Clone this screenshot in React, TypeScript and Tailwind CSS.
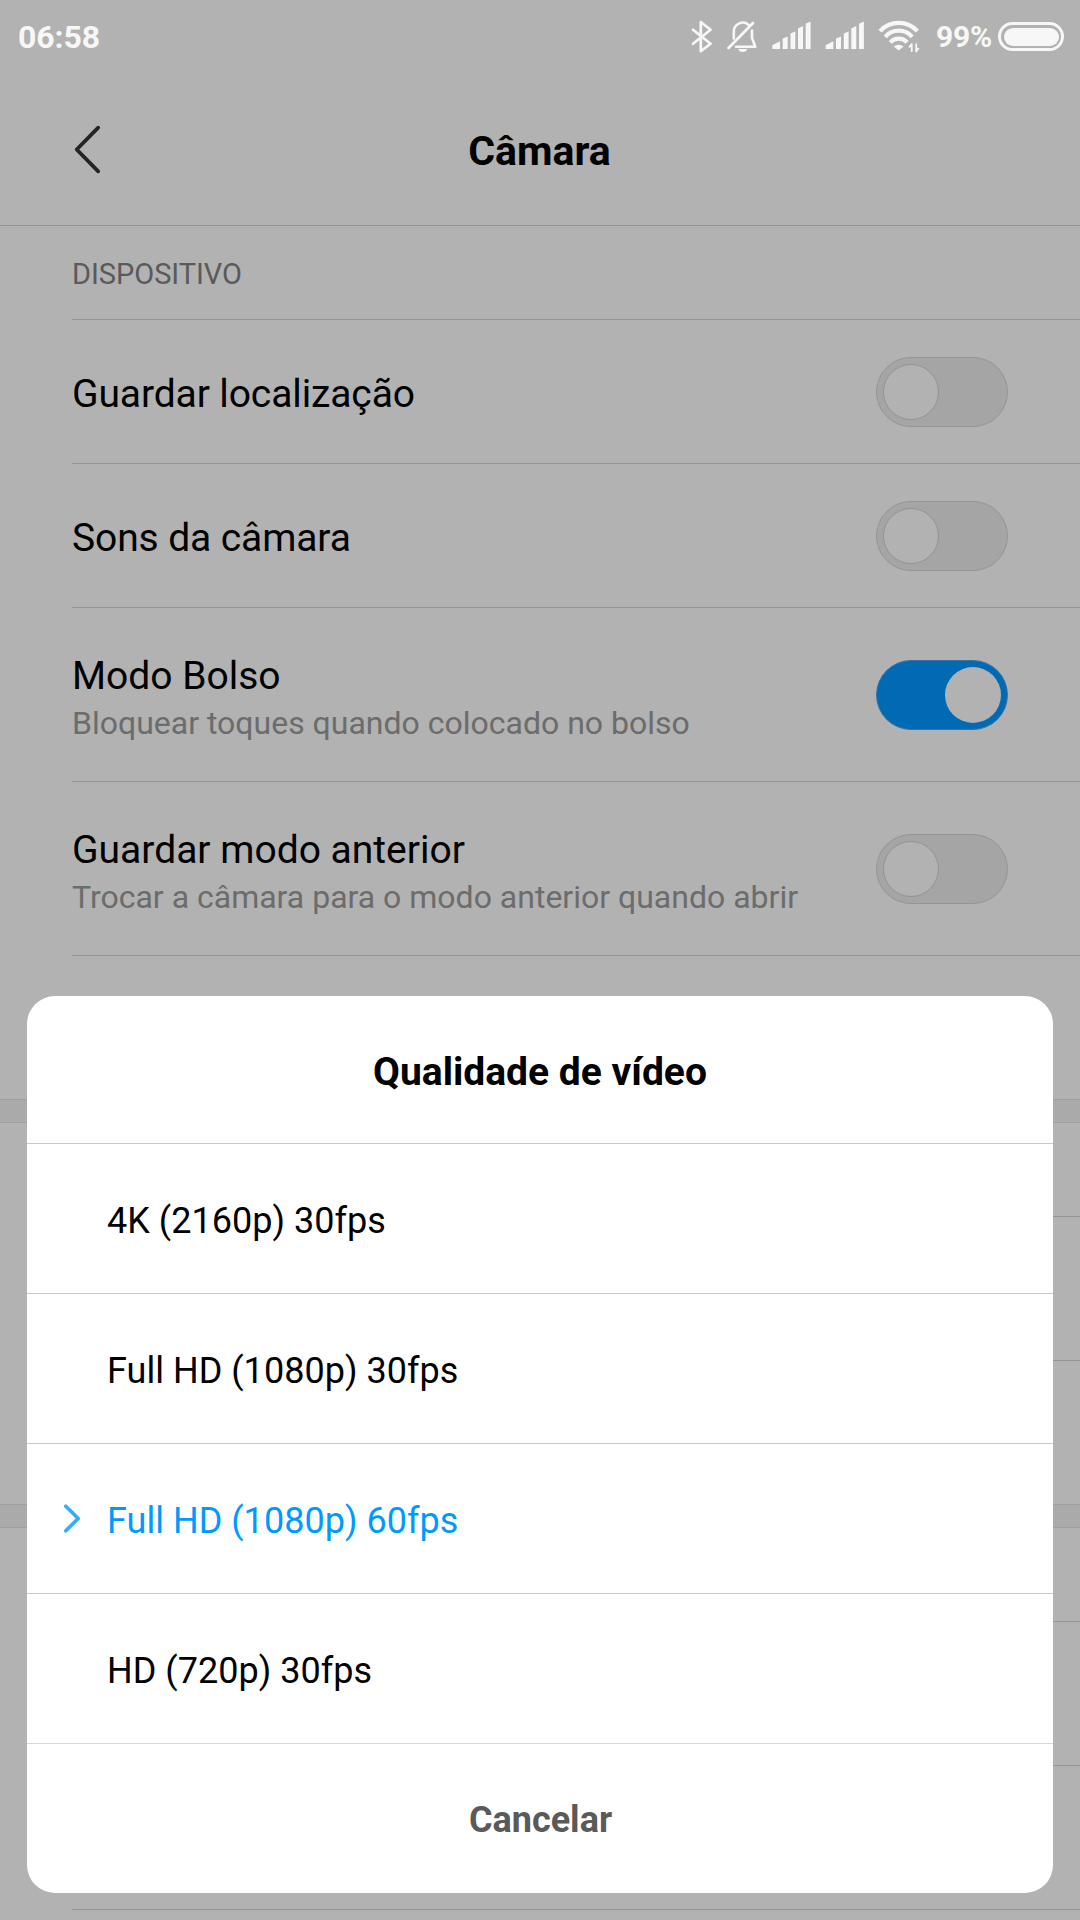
import React from "react";

function Switch({ on }: { on: boolean }) {
  return (
    <div
      className={
        on
          ? "flex h-[70px] w-[132px] shrink-0 items-center justify-end rounded-full border border-[#3a749e] bg-[#006bb4] px-[6px]"
          : "flex h-[70px] w-[132px] shrink-0 items-center rounded-full border border-[#959595] bg-[#a5a5a5] px-[6px]"
      }
    >
      <div className={on ? "size-14 rounded-full bg-[#b2b2b2]" : "size-14 rounded-full border border-[#939393] bg-[#b2b2b2]"} />
    </div>
  );
}

function SettingRow({ title, sub, on }: { title: string; sub?: string; on: boolean }) {
  return (
    <div
      className={
        sub
          ? "ml-18 flex h-[174px] items-center justify-between border-b border-[#959595] pt-px pr-18"
          : "ml-18 flex h-36 items-center justify-between border-b border-[#959595] pt-px pr-18"
      }
    >
      {sub ? (
        <div className="flex flex-col pt-2 whitespace-nowrap">
          <span className="text-[39px] leading-12 text-black">{title}</span>
          <span className="text-[32px] leading-[46px] text-[#6c6c6c]">{sub}</span>
        </div>
      ) : (
        <span className="pt-1 text-[39px] leading-12 tracking-[-0.11px] whitespace-nowrap text-black">{title}</span>
      )}
      <Switch on={on} />
    </div>
  );
}

const BARS =
  "M0 28.5V24.6L7.7 20.6V28.5ZM10.4 28.5V17.8L15.4 15.8V28.5ZM18.2 28.5V12.9L23 10.9V28.5ZM25.7 28.5V7.9L30.7 5.4V28.5ZM33.4 28.5V3.1L38.3 0.8V28.5Z";

function StatusBar() {
  return (
    <div className="flex h-[75px] justify-between text-[#f7f7f7]">
      <span className="mt-[17px] ml-[18px] text-[32px] leading-10 font-bold tracking-[-0.1px]">06:58</span>
      <div className="flex">
        <svg width="256" height="75" viewBox="680 0 256 75" fill="none" stroke="currentColor" strokeLinecap="round" strokeLinejoin="round">
          <path d="M693 29.7 710.6 43.8 700.8 51.3V22L710.6 29.7 693 43.8" strokeWidth="2.7" />
          <path d="M728.5 48 753 23" strokeWidth="2.7" />
          <path d="M733.8 38.5V32a9 9 0 0 1 14.7-7.3M752 30.5V38L755.3 46.7H736" strokeWidth="2.6" />
          <path d="M738 49H747.5Q746 52 742.7 52 739.5 52 738 49Z" fill="currentColor" stroke="none" />
          <g fill="currentColor" stroke="none">
            <path transform="translate(772.3 20.6)" d={BARS} />
            <path transform="translate(825.6 20.6)" d={BARS} />
          </g>
          <g strokeWidth="4.2" strokeLinecap="butt">
            <path d="M880 31.2a25.3 25.3 0 0 1 37.4 0" />
            <path d="M885.2 36.8a18 18 0 0 1 27 0" />
            <path d="M890.3 42.3a11.3 11.3 0 0 1 16.8 0" />
          </g>
          <path d="M893.7 46.5Q898.7 43 903.7 46.5L898.7 50.5Z" fill="currentColor" stroke="none" />
          <path d="M911.7 52V44L909 47.5M916.2 43.5V51.5L918.7 48" strokeWidth="1.8" strokeLinecap="butt" />
        </svg>
        <span className="mt-[17px] w-[62px] text-[30px] leading-10 font-bold tracking-[-0.2px]">99%</span>
        <div className="mt-[22px] mr-[16px] h-[29px] w-[66px] rounded-full border-[3px] border-[#f7f7f7] p-[2.5px]">
          <div className="h-full w-full rounded-full bg-[#f7f7f7]" />
        </div>
      </div>
    </div>
  );
}

function Band() {
  return <div className="h-6 border-y border-[#9f9f9f] bg-[#aaaaaa]" />;
}

const OPTIONS = [
  { label: "4K (2160p) 30fps" },
  { label: "Full HD (1080p) 30fps" },
  { label: "Full HD (1080p) 60fps", selected: true },
  { label: "HD (720p) 30fps", last: true },
];

function Option({ label, selected, last }: { label: string; selected?: boolean; last?: boolean }) {
  return (
    <div className={last ? "flex h-[150px] items-center border-b border-[#d8d8d8]" : "flex h-[150px] items-center border-b border-[#c9c9c9]"}>
      <div className="flex w-20 pl-9">
        {selected && (
          <svg width="18" height="30" viewBox="0 0 18 30" fill="none" stroke="#33adff" strokeWidth="3.7" strokeLinecap="round" strokeLinejoin="round">
            <path d="M2.8 2.300 15.200 14.500 2.800 26.700" />
          </svg>
        )}
      </div>
      <span
        className={
          selected
            ? "pt-[5px] text-[36px] leading-[42px] tracking-[0.03px] text-[#0099ff]"
            : "pt-[5px] text-[36px] leading-[42px] tracking-[0.03px] text-black"
        }
      >
        {label}
      </span>
    </div>
  );
}

export default function App() {
  return (
    <div className="relative h-[1920px] w-[1080px] overflow-hidden bg-[#b2b2b2] font-['Roboto',sans-serif]">
      <StatusBar />
      <header className="relative flex h-[151px] justify-center border-b border-[#959595]">
        <svg className="absolute top-[50px] left-[74px]" width="28" height="50" viewBox="0 0 28 50" fill="none" stroke="#242424" strokeWidth="3.8" strokeLinecap="round" strokeLinejoin="round">
          <path d="M24.2 2.7 2.7 24.5 24.2 46.3" />
        </svg>
        <h1 className="mt-[52px] pr-px text-[41px] leading-12 font-bold">Câmara</h1>
      </header>
      <div className="ml-18 flex h-[94px] items-center border-b border-[#959595]">
        <span className="pt-1 text-[29px] tracking-[-0.05px] text-[#5a5a5a]">DISPOSITIVO</span>
      </div>
      <SettingRow title="Guardar localização" on={false} />
      <SettingRow title="Sons da câmara" on={false} />
      <SettingRow title="Modo Bolso" sub="Bloquear toques quando colocado no bolso" on={true} />
      <SettingRow title="Guardar modo anterior" sub="Trocar a câmara para o modo anterior quando abrir" on={false} />
      <div className="h-[143px]" />
      <Band />
      <div className="ml-18 h-[94px] border-b border-[#959595]" />
      <div className="ml-18 h-36 border-b border-[#959595]" />
      <div className="h-[143px]" />
      <Band />
      <div className="ml-18 h-[94px] border-b border-[#959595]" />
      <div className="ml-18 h-36 border-b border-[#959595]" />
      <div className="ml-18 h-36 border-b border-[#959595]" />

      <div className="absolute top-[996px] left-[27px] flex h-[897px] w-[1026px] flex-col rounded-[28px] bg-white">
        <div className="flex h-[148px] items-center justify-center border-b border-[#c9c9c9]">
          <h2 className="pt-1 text-[39px] leading-12 font-bold">Qualidade de vídeo</h2>
        </div>
        {OPTIONS.map((o) => (
          <Option key={o.label} {...o} />
        ))}
        <div className="flex h-[149px] items-center justify-center">
          <span className="pt-[3px] pl-px text-[36px] leading-[42px] font-bold text-[#5a5a5a]">Cancelar</span>
        </div>
      </div>
    </div>
  );
}
